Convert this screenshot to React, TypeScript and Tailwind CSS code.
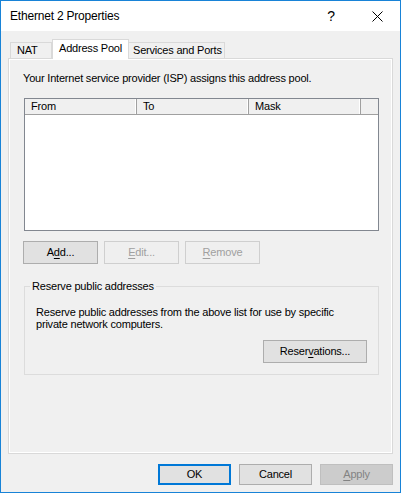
// Ethernet 2 Properties — Address Pool tab (Windows 10 property sheet look)
const font = "font-['Liberation_Sans',Arial,sans-serif]";

function Mn({ children }: { children: string }) {
  // mnemonic underline letter
  return <span className="underline underline-offset-[2px]">{children}</span>;
}

function Btn({
  children,
  disabled,
  width = "w-[75px]",
  height = "h-[23px]",
}: {
  children: React.ReactNode;
  disabled?: boolean;
  width?: string;
  height?: string;
}) {
  return (
    <button
      className={
        disabled
          ? `${width} ${height} flex items-center justify-center border border-[#cfcfcf] bg-[#efefef] text-[#a0a0a0]`
          : `${width} ${height} flex items-center justify-center border border-[#adadad] bg-[#e1e1e1] text-black`
      }
    >
      {children}
    </button>
  );
}

function HeaderCell({ label, width }: { label: string; width: string }) {
  return (
    <div className={`${width} h-full flex items-center pl-[6px] border-r border-[#a0a0a0] shadow-[inset_-1px_0_0_#fff]`}>
      {label}
    </div>
  );
}

export default function App() {
  return (
    <div className={`${font} text-[11px] tracking-[-0.2px] leading-[15px] text-black w-[401px] h-[493px] bg-white`}>
      <div className="w-[401px] h-[493px] border border-[#1883d7] bg-[#f0f0f0] flex flex-col">
        {/* title bar */}
        <div className="h-[30px] bg-white flex items-center shrink-0">
          <div className="pl-[9px] flex-1 text-[12px]">Ethernet 2 Properties</div>
          <div className="w-[46px] h-full flex items-center justify-center text-[14px]">?</div>
          <div className="w-[46px] h-full flex items-center justify-center">
            <svg width="11" height="11" viewBox="0 0 11 11">
              <path d="M0.5 0.5L10.5 10.5M10.5 0.5L0.5 10.5" stroke="#000" strokeWidth="1" />
            </svg>
          </div>
        </div>

        {/* tabs */}
        <div className="pl-[8px] pt-[7px] flex items-end h-[27px] shrink-0 relative z-10">
          <div className="w-[42px] h-[16px] ml-[1px] border border-b-0 border-[#d9d9d9] bg-[#f0f0f0] flex items-center pl-[6px]">
            NAT
          </div>
          <div className="w-[77px] h-[20px] border border-b-0 border-[#d9d9d9] bg-white flex items-start pl-[6px] pt-[1px] -mb-[1px]">
            Address Pool
          </div>
          <div className="w-[96px] h-[16px] border border-b-0 border-l-0 border-[#d9d9d9] bg-[#f0f0f0] flex items-center pl-[4px]">
            Services and Ports
          </div>
        </div>

        {/* tab panel */}
        <div className="mx-[7px] h-[396px] border border-[#d9d9d9] shrink-0">
          <div className="h-full border border-white px-[14px] pt-[11px] flex flex-col">
            <div className="-ml-[1px]">Your Internet service provider (ISP) assigns this address pool.</div>

            {/* list view */}
            <div className="mt-[12px] w-[355px] h-[133px] border border-[#828790] bg-white flex flex-col">
              <div className="h-[16px] flex bg-[#f0f0f0] border-b border-[#a0a0a0] shrink-0">
                <HeaderCell label="From" width="w-[112px]" />
                <HeaderCell label="To" width="w-[112px]" />
                <HeaderCell label="Mask" width="w-[112px]" />
                <div className="flex-1" />
              </div>
              <div className="flex-1" />
            </div>

            {/* list buttons */}
            <div className="mt-[10px] -ml-[1px] flex gap-[6px]">
              <Btn>
                A<Mn>d</Mn>d...
              </Btn>
              <Btn disabled>
                <Mn>E</Mn>dit...
              </Btn>
              <Btn disabled>
                <Mn>R</Mn>emove
              </Btn>
            </div>

            {/* group box */}
            <fieldset className="mt-[15px] w-[355px] border border-[#dcdcdc] px-[11px] pb-[11px]">
              <legend className="ml-[-6px] px-[2px]">Reserve public addresses</legend>
              <div className="mt-[12px] leading-[12px]">
                Reserve public addresses from the above list for use by specific
                <br />
                private network computers.
              </div>
              <div className="mt-[10px] flex justify-end">
                <Btn width="w-[104px]">
                  Reser<Mn>v</Mn>ations...
                </Btn>
              </div>
            </fieldset>
          </div>
        </div>

        {/* dialog buttons */}
        <div className="mt-[10px] pr-[7px] flex justify-end gap-[8px]">
          <button className="w-[73px] h-[21px] border-2 border-[#0078d7] bg-[#e1e1e1] flex items-center justify-center">
            OK
          </button>
          <Btn width="w-[73px]" height="h-[21px]">
            Cancel
          </Btn>
          <button className="w-[73px] h-[21px] border border-[#bfbfbf] bg-[#cccccc] text-[#838383] flex items-center justify-center">
            <Mn>A</Mn>pply
          </button>
        </div>
      </div>
    </div>
  );
}
